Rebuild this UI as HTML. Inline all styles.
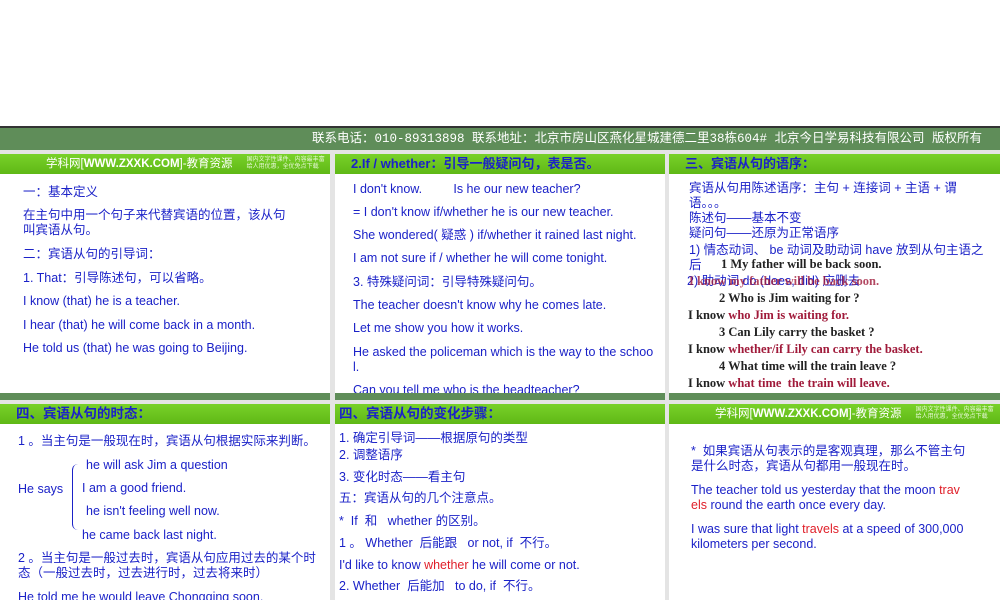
<!DOCTYPE html>
<html><head><meta charset="utf-8"><style>
*{margin:0;padding:0;box-sizing:border-box}
body{width:1000px;height:600px;overflow:hidden;background:#fff;position:relative;font-family:"Liberation Sans","Noto Sans CJK SC",sans-serif;color:#1b22c8}
.abs{position:absolute}
.topbar{left:0;top:126px;width:1000px;height:24px;background:#5f8d59;border-top:2px solid #333;color:#fff;font-size:12.5px;text-align:right;padding-right:18px;line-height:22px;font-family:"Liberation Mono","Noto Sans CJK SC",monospace}
.sep{left:0;top:150px;width:1000px;height:450px;background:#e4e4e4}
.panel{background:#fff;overflow:hidden}
.hdr{position:absolute;left:0;top:0;width:100%;height:20px;background:linear-gradient(#79d12a,#5fb816);color:#fff;font-size:11.5px;line-height:20px;padding-left:46px}
.hdr b{font-size:11.5px}
.hdr i{font-style:normal;font-size:6px;line-height:7px;display:inline-block;vertical-align:middle;margin-left:14px;color:#e8f8d8}
.title{position:absolute;left:16px;top:2px;font-size:13px;color:#1b22c8;font-weight:bold;line-height:16px}
.foot{position:absolute;left:0;bottom:0;width:100%;height:7px;background:#5f8d59}
.t{position:absolute;font-size:12.5px;line-height:15px;white-space:nowrap}
.s{font-family:"Liberation Serif","Noto Serif CJK SC",serif;font-weight:bold;color:#222;font-size:12.5px}
.r{color:#a01a3a}
.red{color:#e0202a}
</style></head><body>
<div class="abs topbar">联系电话：010-89313898 联系地址：北京市房山区燕化星城建德二里38栋604# 北京今日学易科技有限公司 版权所有</div>
<div class="abs sep"></div>

<div class="abs panel" style="left:0;top:154px;width:330px;height:246px">
<div class="hdr">学科网[<b>WWW.ZXXK.COM</b>]-教育资源<i>国内文字性课件、内容最丰富<br>给人用优惠，全优免点下载</i></div>
<div class="t" style="left:23px;top:31px">一：基本定义</div>
<div class="t" style="left:23px;top:54px">在主句中用一个句子来代替宾语的位置，该从句</div>
<div class="t" style="left:23px;top:69px">叫宾语从句。</div>
<div class="t" style="left:23px;top:93px">二：宾语从句的引导词：</div>
<div class="t" style="left:23px;top:117px">1. That：引导陈述句，可以省略。</div>
<div class="t" style="left:23px;top:140px">I know (that) he is a teacher.</div>
<div class="t" style="left:23px;top:164px">I hear (that) he will come back in a month.</div>
<div class="t" style="left:23px;top:187px">He told us (that) he was going to Beijing.</div>
<div class="foot"></div>
</div>

<div class="abs panel" style="left:335px;top:154px;width:330px;height:246px">
<div class="hdr"></div>
<div class="title">2.If / whether：引导一般疑问句，表是否。</div>
<div class="t" style="left:18px;top:28px">I don't know.&nbsp;&nbsp;&nbsp;&nbsp;&nbsp;&nbsp;&nbsp;&nbsp; Is he our new teacher?</div>
<div class="t" style="left:18px;top:51px">= I don't know if/whether he is our new teacher.</div>
<div class="t" style="left:18px;top:74px">She wondered( 疑惑 ) if/whether it rained last night.</div>
<div class="t" style="left:18px;top:97px">I am not sure if / whether he will come tonight.</div>
<div class="t" style="left:18px;top:121px">3. 特殊疑问词：引导特殊疑问句。</div>
<div class="t" style="left:18px;top:144px">The teacher doesn't know why he comes late.</div>
<div class="t" style="left:18px;top:167px">Let me show you how it works.</div>
<div class="t" style="left:18px;top:191px">He asked the policeman which is the way to the schoo</div>
<div class="t" style="left:18px;top:206px">l.</div>
<div class="t" style="left:18px;top:229px">Can you tell me who is the headteacher?</div>
<div class="foot"></div>
</div>

<div class="abs panel" style="left:669px;top:154px;width:331px;height:246px">
<div class="hdr"></div>
<div class="title">三、宾语从句的语序：</div>
<div class="t" style="left:20px;top:27px">宾语从句用陈述语序：主句 + 连接词 + 主语 + 谓</div>
<div class="t" style="left:20px;top:42px">语。。。</div>
<div class="t" style="left:20px;top:57px">陈述句——基本不变</div>
<div class="t" style="left:20px;top:72px">疑问句——还原为正常语序</div>
<div class="t" style="left:20px;top:89px">1) 情态动词、 be 动词及助动词 have 放到从句主语之</div>
<div class="t" style="left:20px;top:104px">后</div>
<div class="t s" style="left:52px;top:103px">1 My father will be back soon.</div>
<div class="t" style="left:18px;top:120px;color:#1b22c8">2) 助动词 do (does, did) 应删去</div>
<div class="t s r" style="left:20px;top:120px;opacity:.8">I know my father will be back soon.</div>
<div class="t s" style="left:50px;top:137px">2 Who is Jim waiting for ?</div>
<div class="t s" style="left:19px;top:154px">I know <span class="r">who Jim is waiting for.</span></div>
<div class="t s" style="left:50px;top:171px">3 Can Lily carry the basket ?</div>
<div class="t s" style="left:19px;top:188px">I know <span class="r">whether/if Lily can carry the basket.</span></div>
<div class="t s" style="left:50px;top:205px">4 What time will the train leave ?</div>
<div class="t s" style="left:19px;top:222px">I know <span class="r">what time&nbsp; the train will leave.</span></div>
<div class="foot"></div>
</div>

<div class="abs panel" style="left:0;top:404px;width:330px;height:196px">
<div class="hdr"></div>
<div class="title" style="font-size:13.5px">四、宾语从句的时态：</div>
<div class="t" style="left:18px;top:30px">1 。当主句是一般现在时，宾语从句根据实际来判断。</div>
<div class="t" style="left:86px;top:54px">he will ask Jim a question</div>
<div class="t" style="left:18px;top:78px">He says</div>
<div class="abs" style="left:72px;top:60px;width:8px;height:66px;border-left:1.5px solid #1b22c8;border-radius:6px 0 0 6px"></div>
<div class="t" style="left:82px;top:77px">I am a good friend.</div>
<div class="t" style="left:86px;top:100px">he isn't feeling well now.</div>
<div class="t" style="left:82px;top:124px">he came back last night.</div>
<div class="t" style="left:18px;top:147px">2 。当主句是一般过去时，宾语从句应用过去的某个时</div>
<div class="t" style="left:18px;top:162px">态（一般过去时，过去进行时，过去将来时）</div>
<div class="t" style="left:18px;top:186px">He told me he would leave Chongqing soon.</div>
</div>

<div class="abs panel" style="left:335px;top:404px;width:330px;height:196px">
<div class="hdr"></div>
<div class="title" style="font-size:13.5px;left:4px">四、宾语从句的变化步骤：</div>
<div class="t" style="left:4px;top:27px">1. 确定引导词——根据原句的类型</div>
<div class="t" style="left:4px;top:44px">2. 调整语序</div>
<div class="t" style="left:4px;top:66px">3. 变化时态——看主句</div>
<div class="t" style="left:4px;top:87px">五：宾语从句的几个注意点。</div>
<div class="t" style="left:4px;top:110px">*&nbsp; If&nbsp; 和&nbsp;&nbsp; whether 的区别。</div>
<div class="t" style="left:4px;top:132px">1 。 Whether&nbsp; 后能跟&nbsp;&nbsp; or not, if&nbsp; 不行。</div>
<div class="t" style="left:4px;top:154px">I'd like to know <span class="red">whether</span> he will come or not.</div>
<div class="t" style="left:4px;top:175px">2. Whether&nbsp; 后能加&nbsp;&nbsp; to do, if&nbsp; 不行。</div>
</div>

<div class="abs panel" style="left:669px;top:404px;width:331px;height:196px">
<div class="hdr">学科网[<b>WWW.ZXXK.COM</b>]-教育资源<i>国内文字性课件、内容最丰富<br>给人用优惠，全优免点下载</i></div>
<div class="t" style="left:22px;top:40px">*&nbsp; 如果宾语从句表示的是客观真理，那么不管主句</div>
<div class="t" style="left:22px;top:55px">是什么时态，宾语从句都用一般现在时。</div>
<div class="t" style="left:22px;top:79px">The teacher told us yesterday that the moon <span class="red">trav</span></div>
<div class="t" style="left:22px;top:94px"><span class="red">els</span> round the earth once every day.</div>
<div class="t" style="left:22px;top:118px">I was sure that light <span class="red">travels</span> at a speed of 300,000</div>
<div class="t" style="left:22px;top:133px">kilometers per second.</div>
</div>
</body></html>
